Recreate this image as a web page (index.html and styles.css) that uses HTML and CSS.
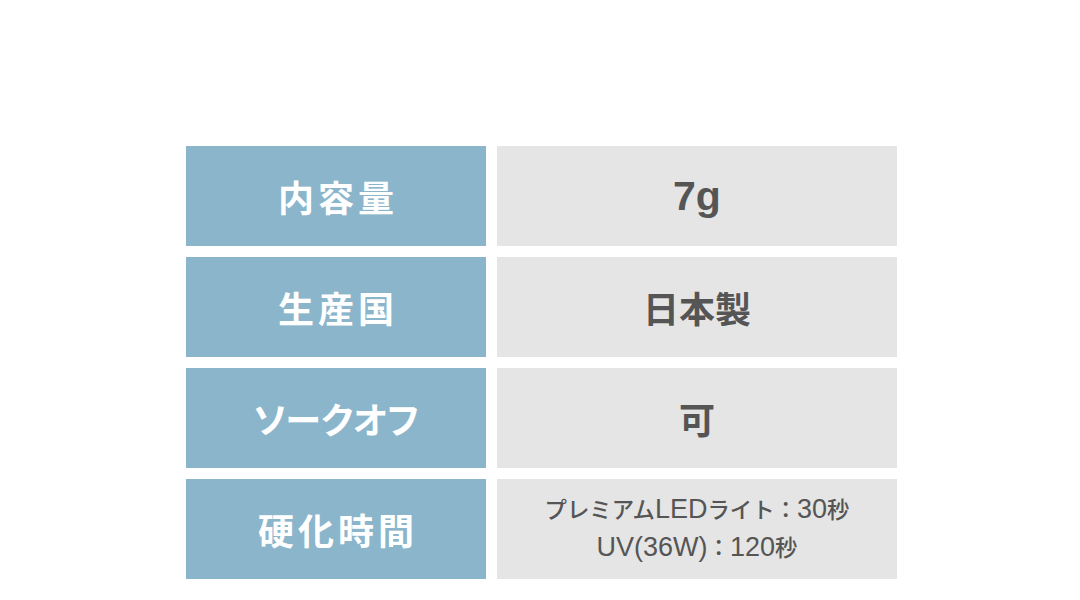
FILE: index.html
```html
<!DOCTYPE html>
<html lang="ja">
<head>
<meta charset="utf-8">
<link rel="stylesheet" href="styles.css">
</head>
<body>
<div class="spec">
  <div class="row">
    <div class="label">内容量</div>
    <div class="value latin">7g</div>
  </div>
  <div class="row">
    <div class="label">生産国</div>
    <div class="value">日本製</div>
  </div>
  <div class="row">
    <div class="label kana">ソークオフ</div>
    <div class="value">可</div>
  </div>
  <div class="row">
    <div class="label">硬化時間</div>
    <div class="value small">
      <span class="line">プレミアム<span class="en">LED</span>ライト：<span class="en">30</span>秒</span>
      <span class="line"><span class="en">UV(36W)</span>：<span class="en">120</span>秒</span>
    </div>
  </div>
</div>
</body>
</html>
```
FILE: styles.css
```css
html, body {
  margin: 0;
  padding: 0;
  background: #ffffff;
}
body {
  font-family: "Liberation Sans", "Noto Sans CJK JP", sans-serif;
  width: 1080px;
  height: 600px;
  overflow: hidden;
}
.spec {
  padding-top: 146px;
  padding-left: 186px;
  display: flex;
  flex-direction: column;
  gap: 11px;
}
.row {
  display: flex;
  gap: 11px;
  height: 100px;
}
.label {
  width: 300px;
  background: #8bb5cb;
  color: #ffffff;
  font-weight: 700;
  font-size: 36px;
  letter-spacing: 4px;
  text-indent: 4px;
  font-feature-settings: "palt";
  display: flex;
  align-items: center;
  justify-content: center;
}
.label.kana {
  letter-spacing: 0;
  text-indent: 0;
}
.value {
  width: 400px;
  background: #e5e5e5;
  color: #555555;
  font-weight: 700;
  font-size: 36px;
  display: flex;
  align-items: center;
  justify-content: center;
  text-align: center;
}
.value.latin {
  font-size: 41px;
}
.value.small {
  flex-direction: column;
  font-size: 22.4px;
  font-weight: 500;
  line-height: 37px;
}
.value.small .line {
  display: block;
  white-space: nowrap;
}
.value.small .en {
  font-size: 27px;
}
```
